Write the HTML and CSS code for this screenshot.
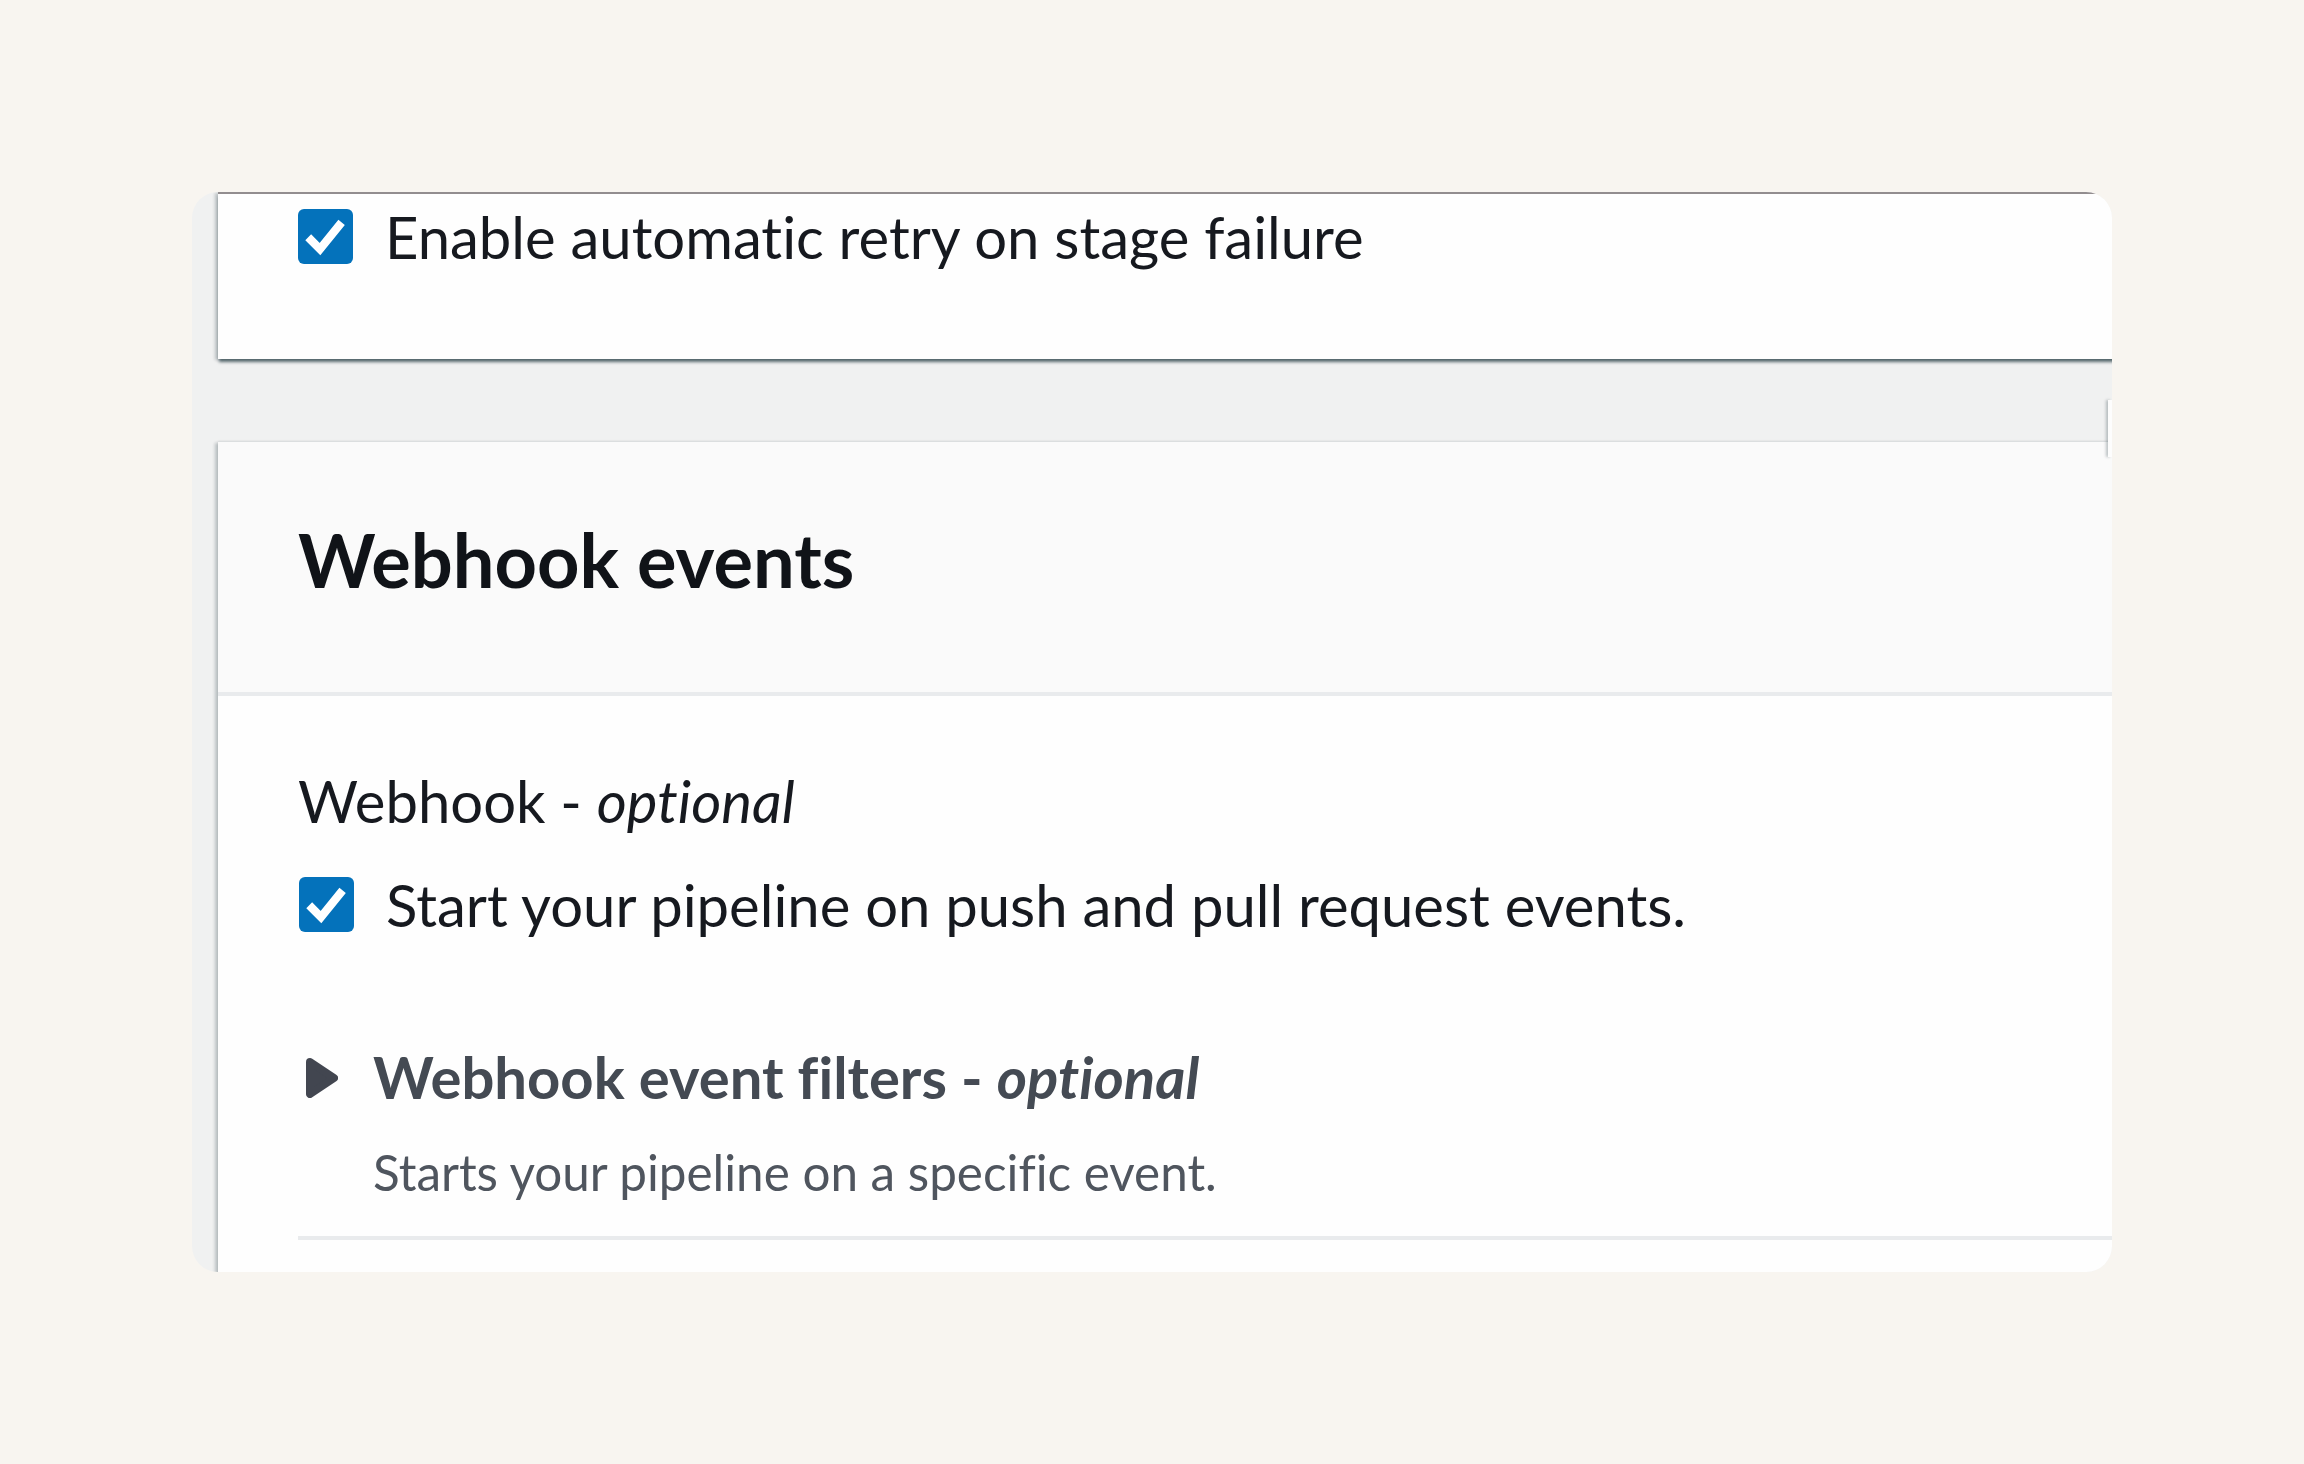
FILE: index.html
```html
<!DOCTYPE html>
<html lang="en">
<head>
<meta charset="utf-8">
<title>Webhook events</title>
<link rel="stylesheet" href="styles.css">
</head>
<body>
<div class="card">
  <div class="edge-sliver"></div>
  <section class="panel panel-top">
    <div class="check-row">
      <span class="checkbox">
        <svg viewBox="0 0 14 14" width="55" height="55" aria-hidden="true"><polyline points="2.6,7.2 5.6,10.2 11.1,3.4" fill="none" stroke="#fff" stroke-width="2.1"/></svg>
      </span>
      <span class="check-label">Enable automatic retry on stage failure</span>
    </div>
  </section>

  <section class="panel panel-webhook">
    <header class="panel-header">
      <h2 class="panel-title">Webhook events</h2>
    </header>
    <div class="panel-body">
      <div class="field-label">Webhook - <i>optional</i></div>
      <div class="check-row check-row-2">
        <span class="checkbox">
          <svg viewBox="0 0 14 14" width="55" height="55" aria-hidden="true"><polyline points="2.6,7.2 5.6,10.2 11.1,3.4" fill="none" stroke="#fff" stroke-width="2.1"/></svg>
        </span>
        <span class="check-label">Start your pipeline on push and pull request events.</span>
      </div>
      <div class="expand">
        <div class="expand-header">
          <span class="caret">
            <svg viewBox="0 0 32 40" width="32" height="40" aria-hidden="true"><path d="M4 4 L28 20 L4 36 Z" fill="#424650" stroke="#424650" stroke-width="8" stroke-linejoin="round"/></svg>
          </span>
          <span class="expand-title">Webhook event filters - <i>optional</i></span>
        </div>
        <div class="expand-desc">Starts your pipeline on a specific event.</div>
      </div>
      <div class="divider"></div>
    </div>
  </section>
</div>
</body>
</html>
```
FILE: styles.css
```css
html, body {
  margin: 0;
  padding: 0;
}
body {
  background: #f8f5f0;
  font-family: "Lato", "Roboto", sans-serif;
  font-variant-ligatures: none;
  font-feature-settings: "liga" 0, "clig" 0, "dlig" 0;
  color: #16191f;
}
.card {
  position: relative;
  margin: 192px 0 0 192px;
  width: 1920px;
  height: 1080px;
  box-sizing: border-box;
  border-radius: 26px;
  overflow: hidden;
  background: #f0f1f1;
  padding-left: 26px;
}
.edge-sliver {
  position: absolute;
  right: 0;
  top: 208px;
  width: 4px;
  height: 57px;
  background: #fdfdfd;
  box-shadow: -2px 0 3px rgba(0, 28, 36, 0.25);
  z-index: 2;
}
.panel {
  margin-right: -60px;
  background: #fefefe;
}
.panel-top {
  border-top: 2px solid #928d8f;
  padding: 2px 0 82px 80px;
  box-shadow: 0 4px 3px -1px rgba(0, 28, 36, 0.6), -3px 1px 3px rgba(0, 28, 36, 0.22);
}
.check-row {
  display: flex;
  align-items: center;
  height: 81px;
}
.checkbox {
  width: 55px;
  height: 55px;
  flex: none;
  border-radius: 6px;
  background: #0472bb;
  display: flex;
}
.check-label {
  margin-left: 32px;
  font-size: 58px;
  line-height: 81px;
  white-space: nowrap;
}
.panel-webhook {
  margin-top: 83px;
  box-shadow: 0 -1px 2px rgba(0, 28, 36, 0.08), -3px 1px 3px rgba(0, 28, 36, 0.22);
}
.panel-header {
  background: #fafafa;
  padding: 68px 0 82px 80px;
  border-bottom: 4px solid #e9ebed;
}
.panel-title {
  margin: 0;
  font-size: 74px;
  line-height: 100px;
  font-weight: 700;
  color: #101318;
}
.panel-body {
  padding: 64px 0 0 80px;
  height: 600px;
}
.field-label {
  font-size: 58px;
  line-height: 81px;
  white-space: nowrap;
}
.field-label i {
  font-style: italic;
}
.check-row-2 {
  margin-top: 23px;
  margin-left: 1px;
}
.expand {
  margin-top: 91px;
}
.expand-header {
  display: flex;
  align-items: center;
  height: 81px;
  padding-left: 8px;
}
.caret {
  width: 32px;
  height: 40px;
  display: flex;
  margin-top: 3px;
}
.expand-title {
  margin-left: 35px;
  font-size: 58px;
  line-height: 81px;
  font-weight: 700;
  color: #444a53;
  white-space: nowrap;
}
.expand-title i {
  font-style: italic;
}
.expand-desc {
  margin-top: 21px;
  padding-left: 75px;
  font-size: 49.4px;
  line-height: 68px;
  color: #4f555e;
  white-space: nowrap;
}
.divider {
  margin-top: 30px;
  border-top: 4px solid #e9ebed;
}
```
